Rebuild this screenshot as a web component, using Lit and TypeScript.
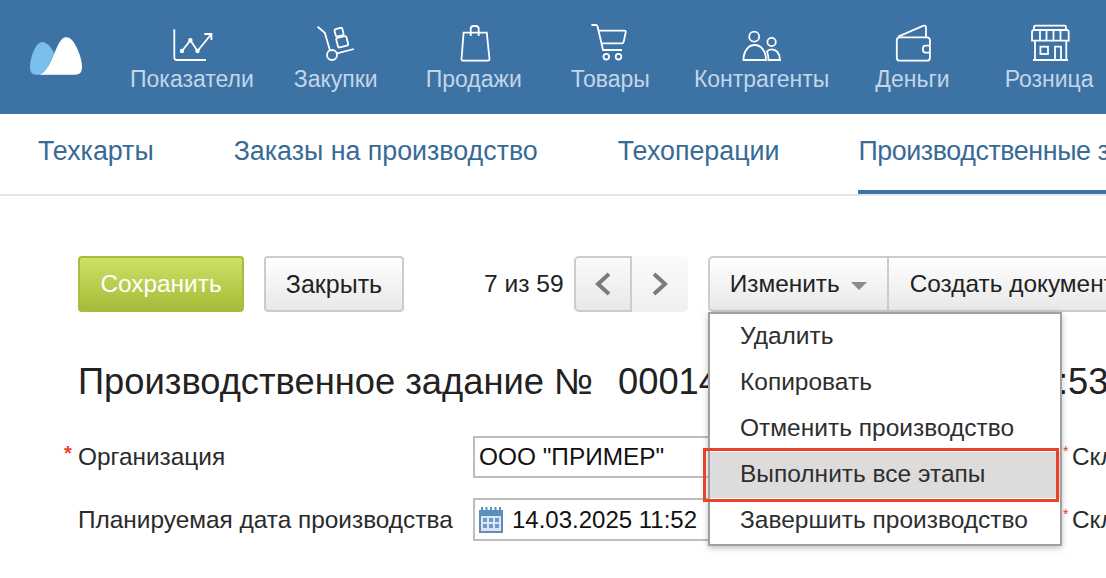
import { LitElement, html, css, svg } from "lit";
import { customElement } from "lit/decorators.js";

const NAV = [
  { label: "Показатели", gap: 0, icon: "chart" },
  { label: "Закупки", gap: 40, icon: "dolly" },
  { label: "Продажи", gap: 48, icon: "bag" },
  { label: "Товары", gap: 49, icon: "cart" },
  { label: "Контрагенты", gap: 44, icon: "people" },
  { label: "Деньги", gap: 46, icon: "wallet" },
  { label: "Розница", gap: 55, icon: "store" },
];

const navIcon = (name: string) => {
  switch (name) {
    case "chart":
      return svg`<path d="M4.300 6.300V34.500q0 2.500 2.500 2.500H36"/><path d="M12 28l8.400-10.700L27.500 28l13.900-17M34.300 11h7.100v6"/><circle class="dot" cx="12" cy="28" r="1.300"/><circle class="dot" cx="20.400" cy="17.300" r="1.300"/><circle class="dot" cx="27.500" cy="28" r="1.300"/>`;
    case "dolly":
      return svg`<path d="M3.600 3.700l7.200 6L16 27.500"/><circle cx="18" cy="32" r="5"/><path d="M23 30.300L40 26"/><rect x="21" y="5.300" width="8" height="7.700" rx="1.500" transform="rotate(-14 25 9)"/><rect x="23" y="14" width="10.500" height="9.700" rx="1.500" transform="rotate(-14 28 19)"/>`;
    case "bag":
      return svg`<path d="M11.600 9.700h23.200l2.700 26.500q0 1.500-1.500 1.500H11q-1.500 0-1.500-1.500z"/><path d="M18.700 13V6q0-3 3-3h2q3 0 3 3v7"/>`;
    case "cart":
      return svg`<path d="M3.400 2h4.500q1.500 0 1.800 2L15 27h19"/><path d="M11 7.700h25.500q1.500 0 1.200 1.500l-2 9.500q-.4 1.600-2 1.600H13"/><circle cx="18.300" cy="33.700" r="2.800"/><circle cx="30.500" cy="33.700" r="2.800"/>`;
    case "people":
      return svg`<circle cx="14.200" cy="13.700" r="5"/><circle cx="31.600" cy="19" r="4.200"/><path d="M3.500 37c0-9 5-15 11.200-15S26 28 26 37z"/><path d="M28.500 37c0-3.500-.5-6-1.500-8.500 1-1.500 2.700-2.200 4.500-2.200 4.700 0 8.500 4 8.500 10.700z"/>`;
    case "wallet":
      return svg`<path d="M8.200 13.700L33 2.900q3-1 3 1.500v9.900"/><rect x="6.800" y="14.300" width="33.100" height="23.400" rx="3"/><path d="M39.900 22.700h-4.500q-2.500 0-2.500 3.500t2.500 3.500h4.500"/>`;
    default:
      return svg`<path d="M7 7V4q0-1.300 1.300-1.300h29.400q1.300 0 1.300 1.300v3"/><path d="M5 9q0-2 2-2h32.700q2 0 2 2v8.700H5z"/><path d="M13 7v10.700M19.500 7v10.700M26.500 7v10.700M33.500 7v10.700"/><path d="M8 17.700V37h31.300V17.700M6 37h35"/><rect x="13.400" y="23.700" width="7.600" height="7.300"/><path d="M28 37V23.700h6V37"/>`;
  }
};

@customElement("app-root")
export class AppRoot extends LitElement {
  static styles = css`
    :host { display: block; width: 1106px; height: 578px; overflow: hidden; position: relative; background: #fff; font-family: "Liberation Sans", Arial, sans-serif; color: #222; }
    .nav { height: 114px; background: #3d72a4; display: flex; align-items: flex-start; }
    .logo { width: 56px; height: 42px; margin: 34px 0 0 28px; flex: none; }
    .items { display: flex; margin-left: 46px; flex: none; }
    .item { display: flex; flex-direction: column; align-items: center; padding-top: 23px; flex: none; color: #c3d6e8; font-size: 23px; line-height: 26px; white-space: nowrap; }
    .item svg { width: 44px; height: 40px; fill: none; stroke: #fff; stroke-width: 1.800; display: block; margin-bottom: 3px; }
    .item svg .dot { fill: #fff; }
    .tabs { height: 80px; border-bottom: 2px solid #e6e6e6; display: flex; padding-left: 38px; gap: 80px; font-size: 26.800px; color: #386a96; white-space: nowrap; }
    .tab { height: 80px; line-height: 74px; flex: none; }
    .tab.on { border-bottom: 4px solid #3d72a4; height: 76px; letter-spacing: -.4px; margin-left: -1px; }
    .toolbar { display: flex; align-items: stretch; height: 56px; margin: 60px 0 0 78px; white-space: nowrap; font-size: 24.400px; }
    .btn { box-sizing: border-box; flex: none; display: flex; align-items: center; border: 2px solid #ccc; border-radius: 4px; background: linear-gradient(#fff, #e8e8e8); color: #222; padding: 0 20px; }
    .save { border-color: #a5bd3e; background: linear-gradient(#cfe066, #a6bc38); color: #fff; width: 166px; justify-content: center; padding: 0; }
    .close { margin-left: 20px; width: 140px; justify-content: center; padding: 0; font-size: 25px; }
    .count { margin-left: 80px; flex: none; align-self: center; font-size: 24.600px; color: #222; }
    .pager { display: flex; flex: none; margin-left: 10px; }
    .pg { box-sizing: border-box; width: 58px; display: flex; align-items: center; justify-content: center; border: 2px solid #ccc; border-radius: 5px 0 0 5px; background: linear-gradient(#fafafa, #e8e8e8); }
    .pg.next { width: 56px; border: none; border-radius: 0 5px 5px 0; background: linear-gradient(#fafafa, #f0f0f0); }
    .pg svg { width: 18px; height: 24px; fill: none; stroke: #7b7b7b; stroke-width: 4; }
    .group { display: flex; flex: none; margin-left: 20px; }
    .g1 { border-radius: 5px 0 0 5px; width: 181px; padding: 0 0 0 20px; }
    .g2 { border-radius: 0; border-left: none; border-right: none; padding-left: 21px; width: 240px; }
    .caret { width: 0; height: 0; border: 8px solid transparent; border-top: 8px solid #8c8c8c; border-bottom: none; margin-left: 11px; margin-top: 3px; }
    h1 { font-weight: 400; font-size: 36.300px; line-height: 42px; margin: 49px 0 0 78px; white-space: nowrap; color: #222; }
    h1 span { margin-left: 15px; word-spacing: 1px; }
    .row { display: flex; align-items: center; margin-left: 78px; white-space: nowrap; font-size: 24.400px; color: #2a2a2a; position: relative; }
    .row.first { margin-top: 33px; height: 42px; }
    .row.second { margin-top: 20px; height: 43px; }
    .star { position: absolute; left: -14px; top: 6px; color: #e8412a; font-size: 20px; font-weight: 700; }
    .lab { width: 395px; flex: none; }
    .field { box-sizing: border-box; flex: none; width: 300px; height: 100%; border: 2px solid #bdbdbd; display: flex; align-items: center; padding-left: 4px; color: #111; font-size: 24.400px; gap: 9px; background: #fff; }
    .field svg { width: 24px; height: 26px; flex: none; }
    .date { font-size: 24px; }
    .skl { margin-left: 299px; flex: none; position: relative; }
    .skl .star { left: -9px; top: 0; font-size: 14px; font-weight: 400; }
    .menu { position: absolute; left: 708px; top: 312px; box-sizing: border-box; width: 354px; height: 234px; border: 2px solid #a0a0a0; background: #fff; box-shadow: 0 2px 6px rgba(0,0,0,.25); font-size: 24.500px; color: #2e2e2e; }
    .mi { height: 46px; line-height: 44px; padding-left: 30px; white-space: nowrap; }
    .mi.hi { background: #dcdcdc; }
    .mark { position: absolute; left: 703px; top: 448px; box-sizing: border-box; width: 356px; height: 54px; border: 3px solid #e8432a; }
  `;

  render() {
    return html`
      <div class="nav">
        <svg class="logo" viewBox="28 34 56 42">
          <path d="M36 74.700C32 74.700 30 72 30 67 30 57 36 42 42 42 47 42 51 47 54 53L45 74.700z" fill="#79c0ee"/>
          <path d="M40 74.700C47 72 50 63 54 54 58 45 61 37.300 66 37.300 72 37.300 76 45 79 53 81 58 82 63 82 67 82 72 80 74.700 75 74.700z" fill="#fff"/>
        </svg>
        <div class="items">
          ${NAV.map(
            (n) => html`<div class="item" style="margin-left:${n.gap}px">
              <svg viewBox="0 0 44 40">${navIcon(n.icon)}</svg>${n.label}
            </div>`
          )}
        </div>
      </div>
      <div class="tabs">
        <div class="tab">Техкарты</div>
        <div class="tab">Заказы на производство</div>
        <div class="tab">Техоперации</div>
        <div class="tab on">Производственные задания</div>
      </div>
      <div class="toolbar">
        <div class="btn save">Сохранить</div>
        <div class="btn close">Закрыть</div>
        <div class="count">7 из 59</div>
        <div class="pager">
          <div class="pg"><svg viewBox="0 0 18 24"><path d="M15 2 4 12l11 10"/></svg></div>
          <div class="pg next"><svg viewBox="0 0 18 24"><path d="M3 2l11 10L3 22"/></svg></div>
        </div>
        <div class="group">
          <div class="btn g1">Изменить<span class="caret"></span></div>
          <div class="btn g2">Создать документ</div>
        </div>
      </div>
      <h1>Производственное задание № <span>00014 от 14.03.2025 11:52:53</span></h1>
      <div class="row first">
        <span class="star">*</span><span class="lab">Организация</span>
        <div class="field">ООО "ПРИМЕР"</div>
        <span class="skl"><span class="star">*</span>Склад</span>
      </div>
      <div class="row second">
        <span class="lab">Планируемая дата производства</span>
        <div class="field">
          <svg viewBox="0 0 24 26">
            <rect x="0" y="3" width="24" height="23" fill="#5b8fc0"/>
            <path d="M3 0v5M7.500 0v5M12 0v5M16.500 0v5M21 0v5" stroke="#5b8fc0" stroke-width="2"/>
            <rect x="2" y="9" width="20" height="15" fill="#dbe6f1"/>
            <path d="M4 11h4v4H4zM10 11h4v4h-4zM16 11h4v4h-4zM4 17h4v4H4zM10 17h4v4h-4zM16 17h4v4h-4z" fill="#6b9acb"/>
          </svg>
          <span class="date">14.03.2025 11:52</span>
        </div>
        <span class="skl"><span class="star">*</span>Склад</span>
      </div>
      <div class="menu">
        <div class="mi">Удалить</div>
        <div class="mi">Копировать</div>
        <div class="mi">Отменить производство</div>
        <div class="mi hi">Выполнить все этапы</div>
        <div class="mi">Завершить производство</div>
      </div>
      <div class="mark"></div>
    `;
  }
}
